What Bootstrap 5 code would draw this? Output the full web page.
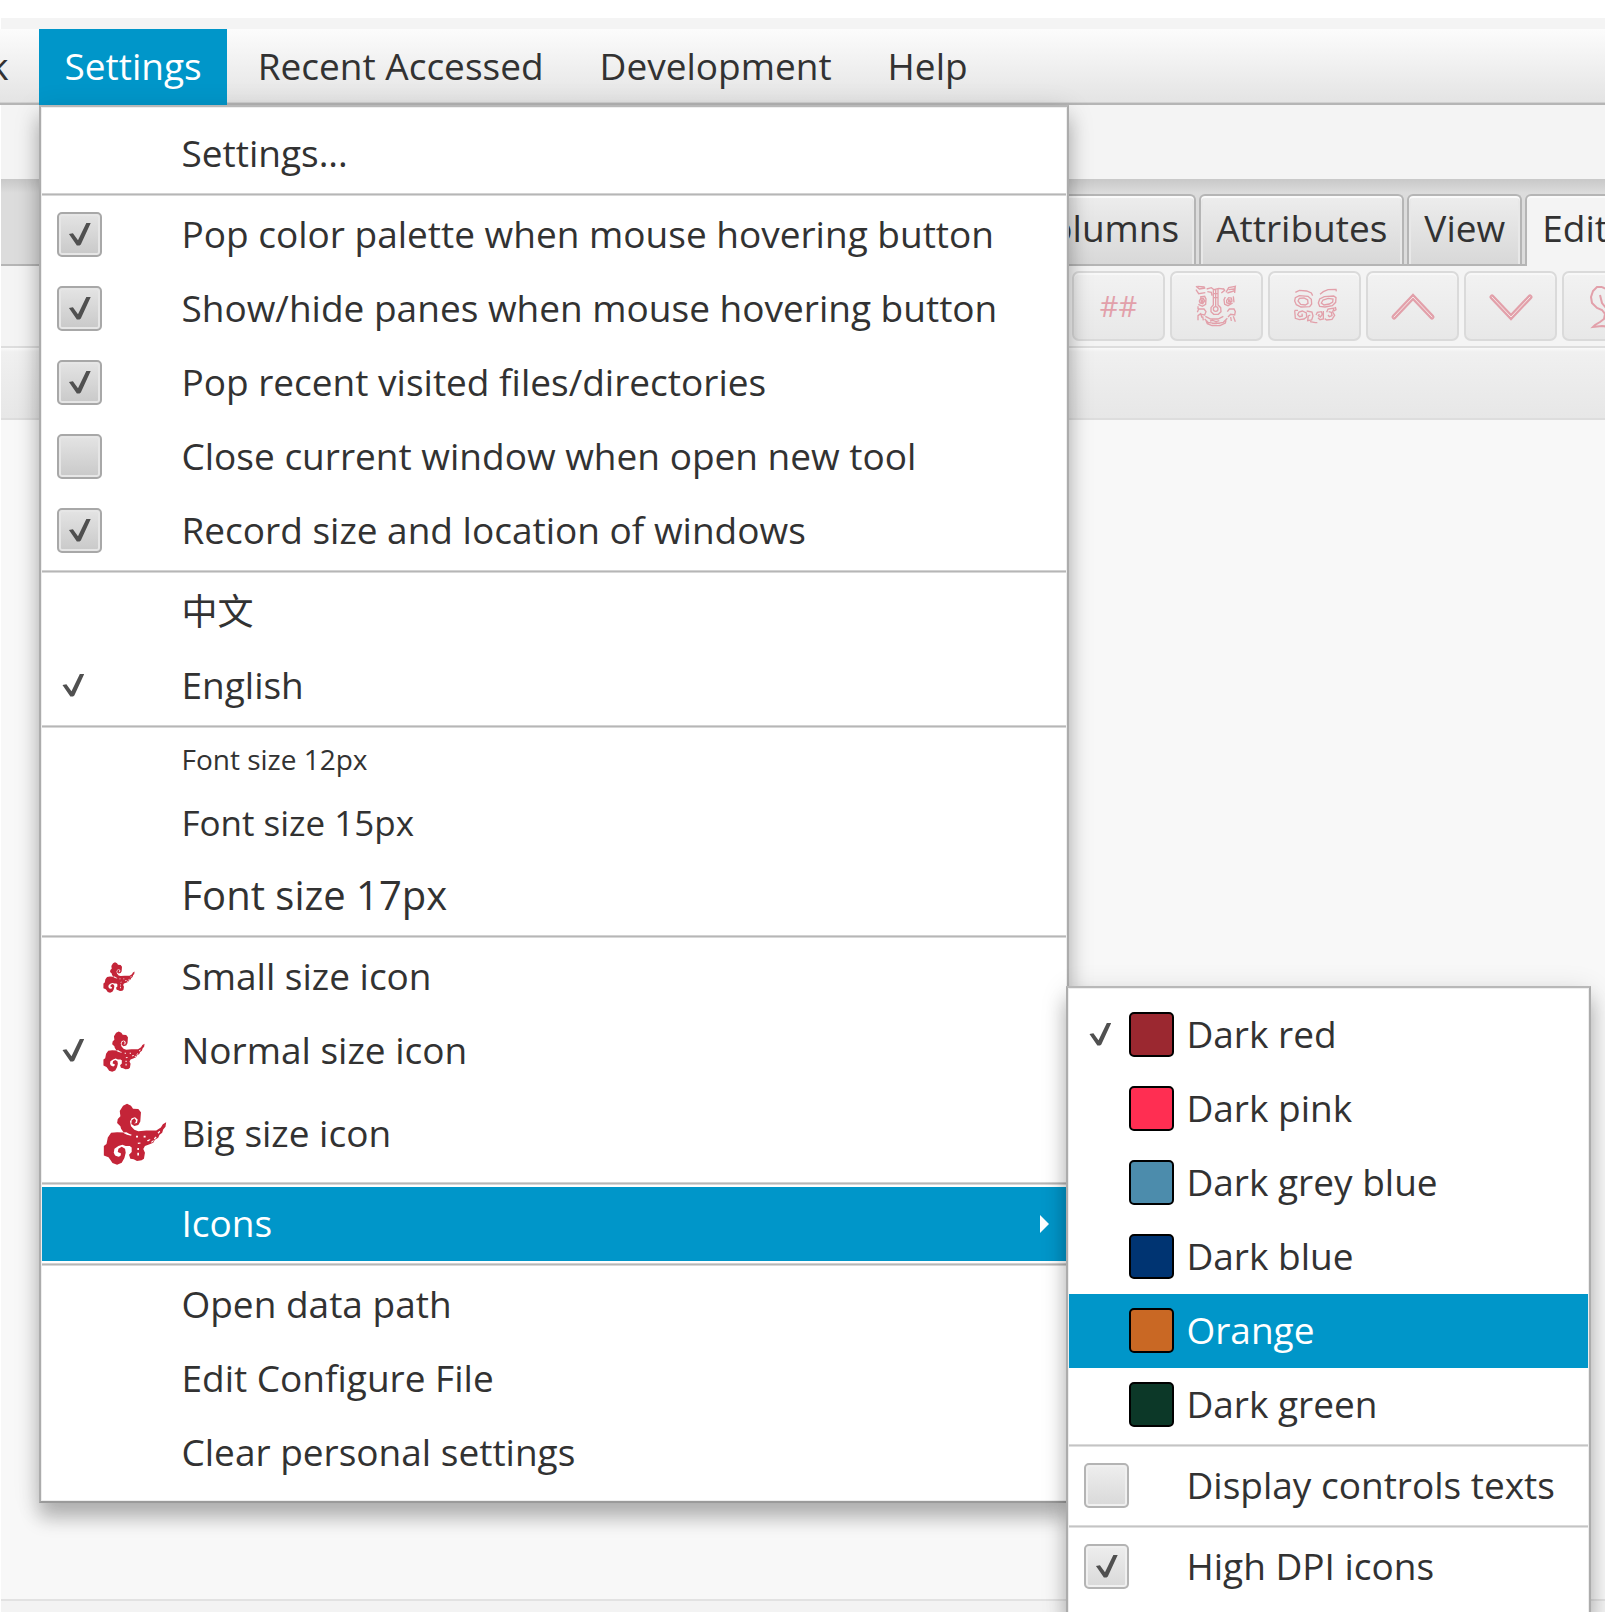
<!DOCTYPE html>
<html lang="en">
<head>
<meta charset="utf-8">
<meta name="viewport" content="width=device-width, initial-scale=1">
<title>Settings</title>
<link href="https://cdn.jsdelivr.net/npm/bootstrap@5.3.0/dist/css/bootstrap.min.css" rel="stylesheet">
<style>
  :root { --accent: #0096c9; --ink: #323232; --line: #b5b5b5; }
  body { font-family: "Open Sans", "Noto Sans CJK SC", sans-serif; font-size: 37px; line-height: 50px; color: var(--ink); background: #fff; }
  .app { height: 100vh; padding: 18px 0 0 1px; }

  /* menu bar */
  .titlestrip { height: 11px; background: #f4f4f4; }
  .menubar { height: 76px; gap: 6px; margin-left: -37px; padding: 0; flex-wrap: nowrap; background: linear-gradient(#fcfcfc, #e3e3e3); box-shadow: inset 0 -2px var(--line), inset 0 -3px #d0d0d0; z-index: 5; }
  .menubtn { height: 76px; border: 0; padding: 0 25px 2px; background: none; color: var(--ink); white-space: nowrap; }
  .menubtn.active { background: var(--accent); color: #fff; }

  /* menus */
  .dropdown-menu.fxmenu { display: block; margin: 0; padding: 10px 1px 11px; border: 2px solid; border-radius: 0; border-color: #b8b8b8 #acacac #9a9a9a; background: #fff; color: var(--ink); font-size: 37px; box-shadow: inset 0 0 0 1px #eee, 0 15px 18px rgba(0,0,0,.24), 0 4px 26px rgba(0,0,0,.12); }
  .mainmenu { top: 76px; left: 0; width: 1030px; }
  .submenu { top: -201px; left: 1024px; width: 525px; }
  .fxmenu .dropdown-item { display: flex; align-items: center; min-height: 74px; padding: 0 15px; color: var(--ink); cursor: pointer; }
  .fxmenu .dropdown-item.active { background: var(--accent); color: #fff; }
  .fxmenu .dropdown-divider { height: 3px; margin: 2px 0; border: 0; opacity: 1; background: linear-gradient(#d2d2d2 33%, #b6b6b6 33% 66%, #d8d8d8 66%); }
  .submenu .dropdown-divider { background: linear-gradient(#dadada 33%, #c4c4c4 33% 66%, #e0e0e0 66%); }
  .caption-text { padding-bottom: 2px; }
  .slot { width: 45px; flex: none; }
  .graphic { width: 79px; flex: none; display: flex; padding-left: 1px; }
  .submenu .graphic { width: 57px; padding: 0; }
  .fs12 { font-size: 28px; } .fs15 { font-size: 35px; } .fs17 { font-size: 40px; }
  .cjk { font-size: 36px; }
  .fxmenu .row12 { min-height: 59px; } .fxmenu .row15 { min-height: 69px; } .fxmenu .row17 { min-height: 75px; }
  .fxmenu .rowbig { min-height: 92px; }

  .tick { appearance: none; flex: none; width: 45px; height: 45px; margin: 0 0 2px; display: grid; place-items: center; }
  .tick::before { content: ""; width: 22px; height: 23px; background: #505050; visibility: hidden; clip-path: polygon(0 50%, 18% 47%, 41% 77%, 79% 2%, 100% 0, 54% 96%, 48% 100%, 36% 100%); }
  .tick:checked::before { visibility: visible; }
  .tick[type=checkbox] { border: 2px solid #a8a8a8; border-radius: 5px; background: linear-gradient(#e4e4e4, #c9c9c9); box-shadow: inset 0 0 0 2px #e6e6e6, inset 0 2px #f8f8f8; }
  .submenu .tick[type=checkbox] { border-color: #b4b4b4; background: linear-gradient(#eee, #d9d9d9); box-shadow: inset 0 0 0 2px #f0f0f0, inset 0 2px #fcfcfc; }
  .tick[type=radio] { justify-items: start; padding-left: 5px; }
  .swatch { width: 45px; height: 45px; margin-bottom: 2px; border: 2px solid #000; border-radius: 5px; }
  .sw-red { background: #9b2830; } .sw-pink { background: #ff2e52; } .sw-greyblue { background: #4c8cac; }
  .sw-blue { background: #003472; } .sw-orange { background: #c96824; } .sw-green { background: #0c3828; }
  .i32 { width: 32px; height: 31px; } .i42 { width: 42px; height: 41px; } .i64 { width: 64px; height: 62px; }

  /* window behind the menus */
  .band { height: 74px; background: #f4f4f4; }
  .tabhead { height: 87px; padding: 15px 0 0 1009px; gap: 3px; border-bottom: 2px solid var(--line); background: linear-gradient(#c8c8c8, #dcdcdc 14px); flex-wrap: nowrap; }
  .tabhead .nav-link { height: 70px; flex: none; padding: 0 15px 4px; line-height: 64px; border: 2px solid var(--line); border-bottom: 0; border-radius: 6px 6px 0 0; margin: 0; color: var(--ink); background: linear-gradient(#ededed, #d8d8d8); box-shadow: inset 0 2px #fafafa, inset 2px 0 #e8e8e8, inset -2px 0 #e8e8e8; }
  .tabhead .nav-link.active { height: 72px; padding-bottom: 6px; color: var(--ink); background: #f4f4f4; border-color: var(--line); box-shadow: inset 0 2px #fafafa; }
  .tools { padding: 5px 0 5px 1071px; gap: 5px; background: #f4f4f4; }
  .toolbtn { width: 93px; height: 70px; flex: none; padding: 0; display: grid; place-items: center; border: 2px solid #dadada; border-radius: 7px; background: linear-gradient(#f2f2f2, #e8e8e8); box-shadow: inset 0 2px #f8f8f8; color: #e2a0aa; }
  .toolbtn svg { width: 54px; height: 54px; fill: none; stroke: #e2a0aa; stroke-width: 4; }
  .hashes { font-size: 29px; line-height: 40px; }
  .subbar { height: 74px; border: 2px solid #ddd; border-width: 2px 0; background: linear-gradient(#fafafa, #f0f0f0 4px, #e7e7e7); }
  .canvas-area { background: #f8f8f8; }
  .statusline { height: 13px; border-top: 2px solid #e2e2e2; background: #f3f3f3; }
</style>
<script src="https://cdn.jsdelivr.net/npm/bootstrap@5.3.0/dist/js/bootstrap.bundle.min.js"></script>
</head>
<body>
<svg class="d-none" aria-hidden="true">
  <symbol id="cloud" viewBox="20 18 192 187">
    <path fill="#c42438" d="M210 76L208 90L201 98L198 108L190 114L186 123L176 129L171 138L158 143L146 148L141 157L146 168L143 186L136 191L122 193L112 188L102 186L98 174L106 166L106 152L100 148L88 148L78 144L66 148L54 156L52 168L56 176L66 180L72 178L74 170L64 166L66 156L76 150L86 156L88 168L84 184L76 198L62 204L48 199L42 190L36 182L22 176L22 148L30 142L34 122L44 108L62 106L82 107L74 96L72 88L62 78L64 66L72 58L70 42L80 26L92 20L104 26L110 35L126 36L134 46L132 74L126 84L114 87L105 81L106 70L114 64L119 70L118 76L113 80L122 78L124 68L116 61L106 64L101 74L104 88L114 99L126 103L150 101L180 101L194 92L200 82Z"/>
    <g fill="#fff"><path d="M80 107L90 106L98 111L106 114L104 117L92 114L84 110ZM119 117h6v5h-6zM142 117h6v5h-6zM152 130l8-3 3 2-8 5zM173 124l6-5 2 3-6 6zM164 136l7-6 2 2-6 6zM184 108l6-6 2 3-5 6zM124 138l8-1 1 3-8 2zM123 154h5v6h-5zM123 168h5v8h-5z"/></g>
  </symbol>
</svg>

<div class="app d-flex flex-column overflow-hidden">
  <div class="titlestrip flex-shrink-0"></div>
  <nav class="menubar navbar flex-shrink-0 justify-content-start align-items-start">
    <button type="button" class="menubtn">k</button>
    <div class="dropdown">
      <button type="button" class="menubtn active" aria-expanded="true">Settings</button>
      <ul class="dropdown-menu fxmenu mainmenu">
        <li><a href="#" class="dropdown-item"><span class="slot"></span><span class="graphic"></span><span class="caption-text">Settings...</span></a></li>
        <li><hr class="dropdown-divider"></li>
        <li><label class="dropdown-item"><input class="tick" type="checkbox" checked><span class="graphic"></span><span class="caption-text">Pop color palette when mouse hovering button</span></label></li>
        <li><label class="dropdown-item"><input class="tick" type="checkbox" checked><span class="graphic"></span><span class="caption-text">Show/hide panes when mouse hovering button</span></label></li>
        <li><label class="dropdown-item"><input class="tick" type="checkbox" checked><span class="graphic"></span><span class="caption-text">Pop recent visited files/directories</span></label></li>
        <li><label class="dropdown-item"><input class="tick" type="checkbox"><span class="graphic"></span><span class="caption-text">Close current window when open new tool</span></label></li>
        <li><label class="dropdown-item"><input class="tick" type="checkbox" checked><span class="graphic"></span><span class="caption-text">Record size and location of windows</span></label></li>
        <li><hr class="dropdown-divider"></li>
        <li><label class="dropdown-item"><input class="tick" type="radio" name="lang"><span class="graphic"></span><span class="cjk" lang="zh">中文</span></label></li>
        <li><label class="dropdown-item"><input class="tick" type="radio" name="lang" checked><span class="graphic"></span><span class="caption-text">English</span></label></li>
        <li><hr class="dropdown-divider"></li>
        <li><label class="dropdown-item row12"><input class="tick" type="radio" name="fsize"><span class="graphic"></span><span class="caption-text fs12">Font size 12px</span></label></li>
        <li><label class="dropdown-item row15"><input class="tick" type="radio" name="fsize"><span class="graphic"></span><span class="caption-text fs15">Font size 15px</span></label></li>
        <li><label class="dropdown-item row17"><input class="tick" type="radio" name="fsize"><span class="graphic"></span><span class="caption-text fs17">Font size 17px</span></label></li>
        <li><hr class="dropdown-divider"></li>
        <li><label class="dropdown-item"><input class="tick" type="radio" name="isize"><span class="graphic"><svg class="i32"><use href="#cloud"/></svg></span><span class="caption-text">Small size icon</span></label></li>
        <li><label class="dropdown-item"><input class="tick" type="radio" name="isize" checked><span class="graphic"><svg class="i42"><use href="#cloud"/></svg></span><span class="caption-text">Normal size icon</span></label></li>
        <li><label class="dropdown-item rowbig"><input class="tick" type="radio" name="isize"><span class="graphic"><svg class="i64"><use href="#cloud"/></svg></span><span class="caption-text">Big size icon</span></label></li>
        <li><hr class="dropdown-divider"></li>
        <li class="position-relative">
          <a href="#" class="dropdown-item active"><span class="slot"></span><span class="graphic"></span><span class="caption-text flex-grow-1">Icons</span><svg width="12" height="18" viewBox="0 0 12 18"><path d="M1 0L10 9L1 18Z" fill="#fff"/></svg></a>
          <ul class="dropdown-menu fxmenu submenu">
            <li><label class="dropdown-item"><input class="tick" type="radio" name="hue" checked><span class="graphic"><span class="swatch sw-red"></span></span><span class="caption-text">Dark red</span></label></li>
            <li><label class="dropdown-item"><input class="tick" type="radio" name="hue"><span class="graphic"><span class="swatch sw-pink"></span></span><span class="caption-text">Dark pink</span></label></li>
            <li><label class="dropdown-item"><input class="tick" type="radio" name="hue"><span class="graphic"><span class="swatch sw-greyblue"></span></span><span class="caption-text">Dark grey blue</span></label></li>
            <li><label class="dropdown-item"><input class="tick" type="radio" name="hue"><span class="graphic"><span class="swatch sw-blue"></span></span><span class="caption-text">Dark blue</span></label></li>
            <li><label class="dropdown-item active"><input class="tick" type="radio" name="hue"><span class="graphic"><span class="swatch sw-orange"></span></span><span class="caption-text">Orange</span></label></li>
            <li><label class="dropdown-item"><input class="tick" type="radio" name="hue"><span class="graphic"><span class="swatch sw-green"></span></span><span class="caption-text">Dark green</span></label></li>
            <li><hr class="dropdown-divider"></li>
            <li><label class="dropdown-item"><input class="tick" type="checkbox"><span class="graphic"></span><span class="caption-text">Display controls texts</span></label></li>
            <li><hr class="dropdown-divider"></li>
            <li><label class="dropdown-item"><input class="tick" type="checkbox" checked><span class="graphic"></span><span class="caption-text">High DPI icons</span></label></li>
          </ul>
        </li>
        <li><hr class="dropdown-divider"></li>
        <li><a href="#" class="dropdown-item"><span class="slot"></span><span class="graphic"></span><span class="caption-text">Open data path</span></a></li>
        <li><a href="#" class="dropdown-item"><span class="slot"></span><span class="graphic"></span><span class="caption-text">Edit Configure File</span></a></li>
        <li><a href="#" class="dropdown-item"><span class="slot"></span><span class="graphic"></span><span class="caption-text">Clear personal settings</span></a></li>
      </ul>
    </div>
    <button type="button" class="menubtn">Recent Accessed</button>
    <button type="button" class="menubtn">Development</button>
    <button type="button" class="menubtn">Help</button>
  </nav>

  <div class="band flex-shrink-0"></div>
  <div class="tabhead nav nav-tabs flex-shrink-0" role="tablist">
    <button type="button" class="nav-link" role="tab">Columns</button>
    <button type="button" class="nav-link" role="tab">Attributes</button>
    <button type="button" class="nav-link" role="tab">View</button>
    <button type="button" class="nav-link active" role="tab" aria-selected="true">Edit</button>
  </div>
  <div class="tools d-flex flex-shrink-0">
    <button type="button" class="toolbtn"><span class="hashes">##</span></button>
    <button type="button" class="toolbtn" aria-label="Select all">
      <svg viewBox="0 0 162 162"><path d="M18 22l10 8 18-3M18 32l8 12 20-3M22 22l22 2M50 30l14-4 8 6 14-4 14 2M52 38l12 2 2 10M94 42l10-8-4-6M108 40l8-14 20-4-4 14-20 6M116 32l16-2M136 20l-2 22M70 34l0 44-7 8 0 12 8 8 14 0 8-8-1-12-8-8 0-50M77 30l0 52M70 90a7 7 0 1 0 14 0a7 7 0 1 0-14 0M72 44h10M72 56h10M30 54l14-2 4 8-1 16-10 6-12-6M28 66l4-8 8 0 4 8-6 8-8-2zM34 63h4v6h-4zM106 54l-4 8 2 14 10 4 14-8M110 64l6-8 8 1 2 9-8 8-8-3zM116 63h4v5h-4zM130 52l2 18M22 100l4-10 16 0 6 8-4 10-10-2M24 124l0-14 8-6 4 12M40 124l-2-12M112 98l6-8 14 0 4 8-2 10-12-2-8 8M136 128l-6-16M124 126l-2-12M46 112l16 8 22 0 16-8M44 120l10 10 24 4 22-4 12-12M48 126l4 8 14 6 24 0 16-8 2-8M60 126l8-2 10 4 10-3M66 134l14-2 10 2M24 90v-8"/></svg></button>
    <button type="button" class="toolbtn" aria-label="Select none">
      <svg viewBox="4 0 162 162"><path d="M26 40l12-6 22 2 14 6 4 8M100 46l10-8 14-6 24-1 1 6M24 66l2-10 12-6 26 2 10 9 1 14-6 8-26 1-14-7zM34 66l4-8 14-1 11 6 1 10-8 5-14-2zM95 72l4-12 14-7 28-2 7 5-1 14-10 10-22 4-16-2zM104 72l5-9 16-5 14 2-1 9-10 6-16 3zM24 94l2 24 12 4 14-2 8-6-1-12-12-6-10 3-4 8 6 6 8-2-1-7M60 96l16 3 3 12-4 12-12 2 2-14 6-3M70 128l16 3 6 0M88 108l4-8 12-2 3 8-6 8-6-4 3-5M110 96l0 24-10 2-6-6M120 100l4-10 18-3-4 12 6 10-8 12-16 2-6-4M126 98l8 2 2 10-8 3-4-5M146 84l2 8-6 4M24 94h10"/></svg></button>
    <button type="button" class="toolbtn" aria-label="Move up">
      <svg viewBox="0 0 54 54"><path stroke-width="5" stroke-linecap="round" d="M8 38L27 18L46 38"/><path stroke="#f6e6e6" stroke-width="1" stroke-linecap="round" d="M8 38L27 18L46 38"/></svg></button>
    <button type="button" class="toolbtn" aria-label="Move down">
      <svg viewBox="0 0 54 54"><path stroke-width="5" stroke-linecap="round" d="M8 18L27 38L46 18"/><path stroke="#f6e6e6" stroke-width="1" stroke-linecap="round" d="M8 18L27 38L46 18"/></svg></button>
    <button type="button" class="toolbtn" aria-label="Delete">
      <svg viewBox="0 0 54 54"><path stroke-width="2" d="M20 8l-5 0-4 4-2 6 1 6 5 5 5 2 3 4-1 5-4 3-5 3-2 2 9-1 8 1M20 8l4 2 5-3 6 1 3 5M18 16l2 8 4 5M26 14l-2 8 1 6M38 14l6 3 1 8-7 6-5 5 1 7 8 4"/></svg></button>
  </div>
  <div class="subbar flex-shrink-0"></div>
  <main class="canvas-area flex-grow-1"></main>
  <footer class="statusline flex-shrink-0"></footer>
</div>
</body>
</html>
